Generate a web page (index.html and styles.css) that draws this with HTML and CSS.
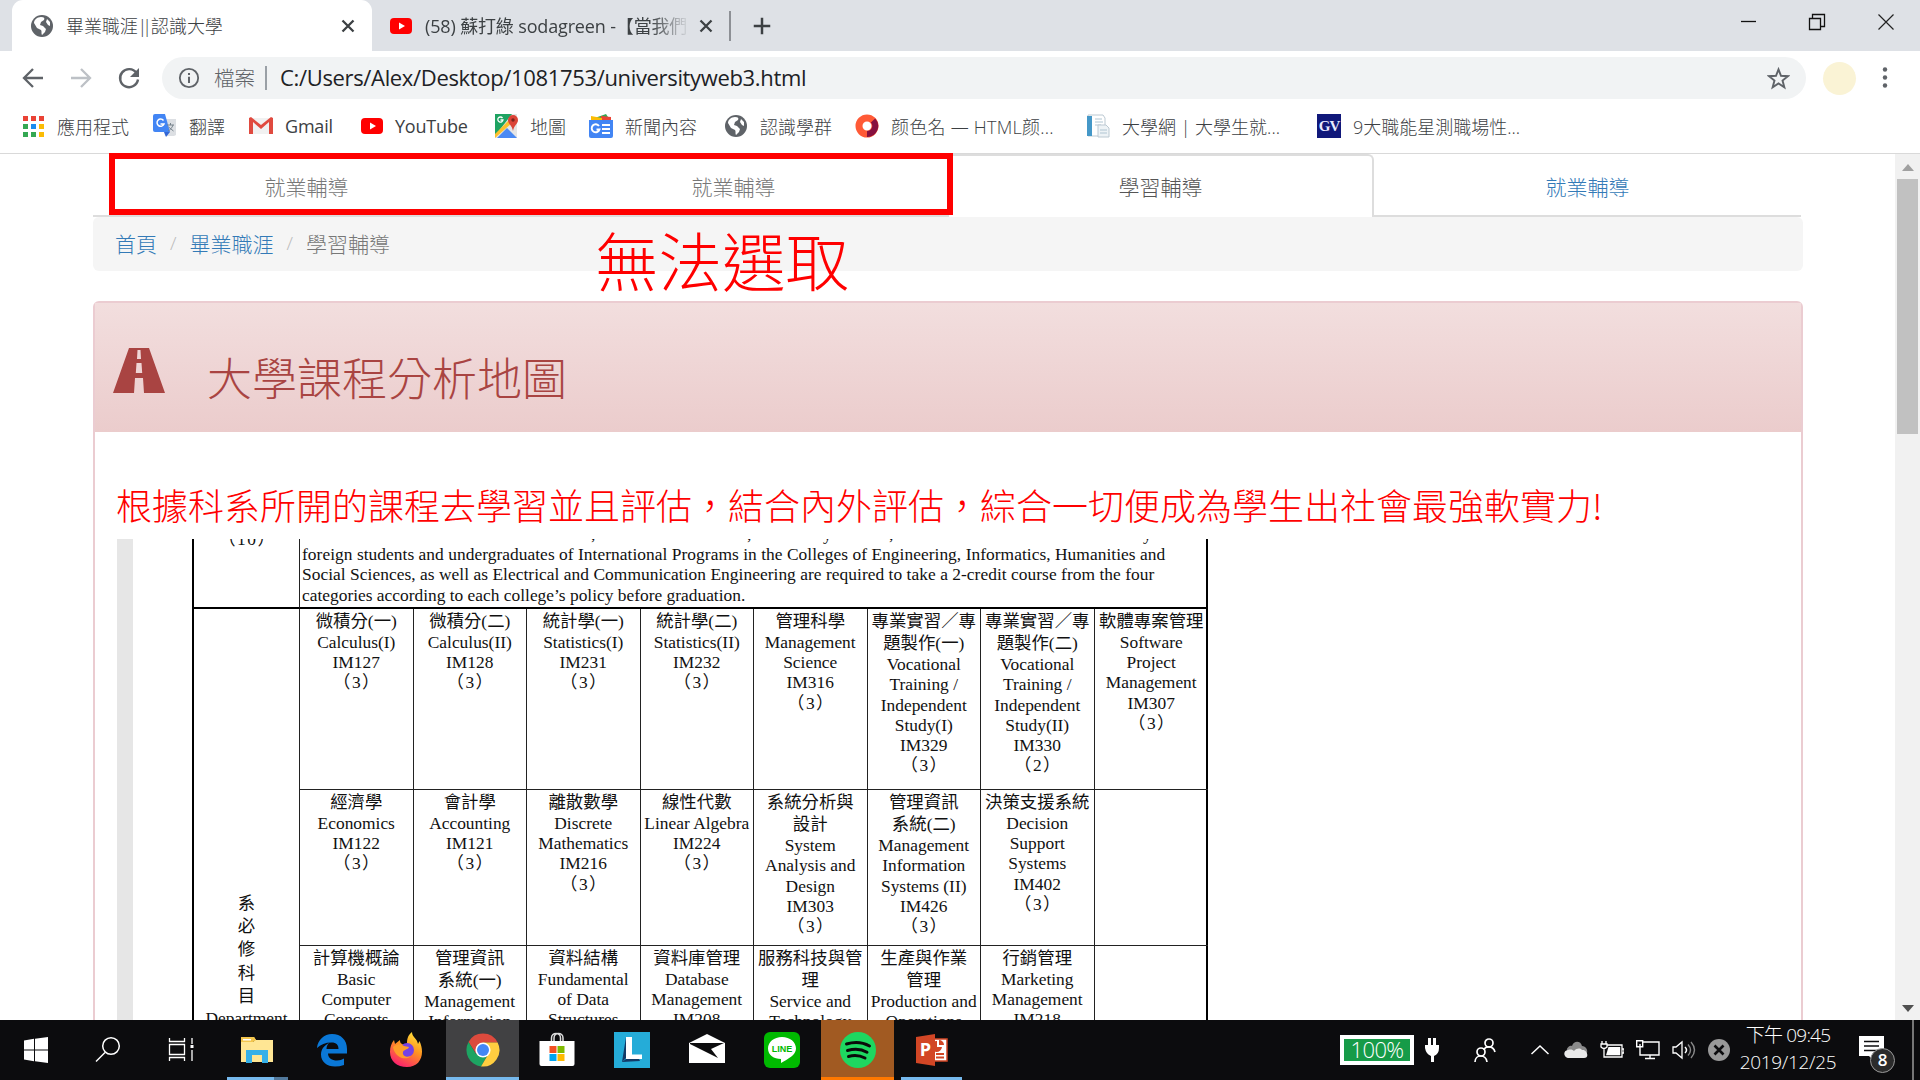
FILE: index.html
```html
<!DOCTYPE html>
<html lang="zh-Hant">
<head>
<meta charset="utf-8">
<title>畢業職涯||認識大學</title>
<link rel="stylesheet" href="styles.css">
</head>
<body>
<svg width="0" height="0" class="defs">
  <symbol id="globe" viewBox="0 0 24 24"><circle cx="12" cy="12" r="11" fill="#5f6368"/><path d="M11 3c3 0 4 1 3 3l-3 2-1 3 3 1 3 3-1 3-3 3c-1-1 0-4-1-5l-4-2-3-5c0-3 3-6 7-6zM17 5l3 3v4l-2-1-2-3z" fill="#fff"/></symbol>
  <symbol id="youtube" viewBox="0 0 24 24"><rect x="1" y="4" width="22" height="16" rx="4" fill="#f00"/><path d="M10 8.500v7l6-3.500z" fill="#fff"/></symbol>
  <symbol id="close" viewBox="0 0 24 24"><path d="M6.500 6.500l11 11m0-11l-11 11" stroke="#3c4043" stroke-width="2.300" fill="none"/></symbol>
</svg>
<header class="tabstrip">
  <div class="tab tab-active">
    <svg class="fav"><use href="#globe"/></svg><span class="tab-title">畢業職涯<span class="pipes">||</span>認識大學</span><svg class="fav"><use href="#close"/></svg>
  </div>
  <div class="tab tab-idle">
    <svg class="fav"><use href="#youtube"/></svg><span class="tab-title faded">(58) 蘇打綠 sodagreen -【當我們</span><svg class="fav"><use href="#close"/></svg>
  </div>
  <span class="tab-divider"></span>
  <svg class="plus" viewBox="0 0 24 24"><path d="M12 3v18M3 12h18" stroke="#3c4043" stroke-width="2.700"/></svg>
  <div class="win">
    <svg viewBox="0 0 20 20"><path d="M3 9.500h15" stroke="#111" stroke-width="1.300"/></svg>
    <svg viewBox="0 0 20 20"><path d="M2.500 6.500h11v11h-11zM5.500 6v-3.500h12v12H14" stroke="#111" stroke-width="1.300" fill="none"/></svg>
    <svg viewBox="0 0 20 20"><path d="M2.500 2.500l15 15m0-15l-15 15" stroke="#222" stroke-width="1.200"/></svg>
  </div>
</header>
<div class="toolbar">
  <svg class="nav" viewBox="0 0 24 24"><path d="M22 12H3M12 3l-9 9 9 9" stroke="#5f6368" stroke-width="2.300" fill="none"/></svg>
  <svg class="nav" viewBox="0 0 24 24"><path d="M2 12h19M12 3l9 9-9 9" stroke="#bdc1c6" stroke-width="2.300" fill="none"/></svg>
  <svg class="nav" viewBox="0 0 24 24"><path d="M19.500 7A9 9 0 1 0 21 13.500" stroke="#5f6368" stroke-width="2.400" fill="none"/><path d="M22 2v9h-9z" fill="#5f6368"/></svg>
  <div class="omnibox">
    <svg class="info" viewBox="0 0 24 24"><circle cx="12" cy="12" r="10" stroke="#5f6368" stroke-width="2" fill="none"/><path d="M12 10.500v7M12 6.500v2.300" stroke="#5f6368" stroke-width="2.200"/></svg>
    <span class="scheme">檔案</span><span class="bar"></span><span class="url">C:/Users/Alex/Desktop/1081753/universityweb3.html</span>
    <svg class="star" viewBox="0 0 24 24"><path d="M12 2.500l2.600 6.700 7.200.4-5.600 4.600 1.900 7-6.100-4-6.100 4 1.900-7-5.600-4.600 7.200-.4z" stroke="#5f6368" stroke-width="2" fill="none"/></svg>
  </div>
  <span class="avatar"></span>
  <svg class="dots" viewBox="0 0 8 24"><circle cx="4" cy="3.500" r="2.200"/><circle cx="4" cy="11.500" r="2.200"/><circle cx="4" cy="19.500" r="2.200"/></svg>
</div>
<nav class="bookmarks">
  <div class="bm"><svg viewBox="0 0 24 24"><path fill="#ea4335" d="M0 2h5v5H0zM8 2h5v5H8zM16 2h5v5h-5z"/><path fill="#34a853" d="M0 10h5v5H0zM0 18h5v5H0z"/><path fill="#1a8cf0" d="M8 10h5v5H8z"/><path fill="#fbbc05" d="M16 10h5v5h-5zM16 18h5v5h-5z"/><path fill="#34a853" d="M8 18h5v5H8z"/></svg><span class="apps-label">應用程式</span></div>
  <div class="bm"><svg viewBox="0 0 24 24"><path fill="#dcdfe3" d="M9 5h14v16l-2 1H12z"/><path fill="#4285f4" d="M2 0h10l5 18H2a2 2 0 0 1-2-2V2a2 2 0 0 1 2-2z"/><path fill="#3367d6" d="M11 18h6l-4 5z"/><path d="M10.500 6.500A3.600 3.600 0 1 0 11 10H7.500" stroke="#fff" stroke-width="1.500" fill="none"/><path d="M14 11h7M17.500 9v2M20 11c-1 3-3 5-5 6M15.500 13l5 4" stroke="#77838c" fill="none"/></svg>翻譯</div>
  <div class="bm"><svg viewBox="0 0 24 24"><path fill="#f1f1f1" d="M2 4h20v16H2z"/><path fill="#e04a3f" d="M0 4l2-1 10 8 10-8 2 1v16h-4V8l-8 7-8-7v12H0z"/></svg><span class="latin">Gmail</span></div>
  <div class="bm"><svg><use href="#youtube"/></svg><span class="latin yt">YouTube</span></div>
  <div class="bm"><svg viewBox="0 0 24 24"><path fill="#e5e5e5" d="M1 0h22v24H1z"/><path fill="#1ea362" d="M1 0h17L1 22z"/><path fill="#fbc02d" d="M1 24v-4L16 5l3 3z"/><path fill="#4a89f3" d="M3 24l10-10 10 10z"/><path fill="#db4437" d="M19 1a5 5 0 0 1 5 5c0 4-4 5-5 11-1-6-5-7-5-11a5 5 0 0 1 5-5z"/><circle cx="19" cy="6" r="1.700" fill="#7b231c"/><path d="M8.500 4A2.600 2.600 0 1 0 9 6H6.500" stroke="#fff" stroke-width="1.300" fill="none"/></svg>地圖</div>
  <div class="bm"><svg viewBox="0 0 24 24"><path fill="#34a853" d="M3 5l14-5 4 6z"/><path fill="#ea4335" d="M12 2l10 1v4H12z"/><path fill="#fbbc05" d="M2 2l11 2v4H2z"/><path fill="#4285f4" d="M0 6h24v16a2 2 0 0 1-2 2H2a2 2 0 0 1-2-2z"/><path d="M10 12a4 4 0 1 0 .5 3.500H7.500M13 11h8M13 15h8M13 19h8" stroke="#fff" stroke-width="1.900" fill="none"/></svg><span class="news">新聞內容</span></div>
  <div class="bm"><svg><use href="#globe"/></svg>認識學群</div>
  <div class="bm"><svg viewBox="0 0 24 24"><circle cx="12" cy="12" r="8" stroke="#ff5a36" stroke-width="7" fill="none"/><path d="M18 6.500a8 8 0 0 1-6 13.500" stroke="#86103f" stroke-width="6" fill="none"/></svg><span class="color-name">颜色名 — HTML颜...</span></div>
  <div class="bm"><svg viewBox="0 0 24 24"><path fill="#fff" stroke="#bcc9d2" d="M2 1h15l2 3v18H2z"/><path fill="#4598c8" d="M1 2h5v20H1z"/><path d="M9 5h7M9 8h8M9 11h6" stroke="#b0c5d2"/><path fill="#eef3f6" stroke="#bcc9d2" d="M12 11h8l3 3v9H12z"/><path d="M14 16h7M14 19h7" stroke="#b0c5d2"/></svg>大學網 | 大學生就...</div>
  <div class="bm"><span class="gv">GV</span>9大職能星測職場性...</div>
</nav>
<main class="viewport">
  <div class="page">
    <ul class="tabs">
      <li class="muted">就業輔導</li><li class="muted">就業輔導</li><li class="active">學習輔導</li><li class="link">就業輔導</li>
    </ul>
    <div class="crumbs"><span class="link">首頁</span><i>/</i><span class="link">畢業職涯</span><i>/</i><span class="muted">學習輔導</span></div>
    <section class="panel">
      <div class="panel-head">
        <svg viewBox="0 0 52 45"><path fill="#a94442" fill-rule="evenodd" d="M16 0h20l16 45H31l-1-15h-8l-1 15H0zM24.500 2l-.5 9h4l-.5-9zM23.500 15l-.7 10h6.400l-.7-10z"/></svg>
        <h1>大學課程分析地圖</h1>
      </div>
      <div class="panel-body">
        <p class="lead">根據科系所開的課程去學習並且評估，結合內外評估，綜合一切便成為學生出社會最強軟實力!</p>
        <div class="sheet">
          <div class="curriculum">
            <div class="side top"><i>（10）</i></div>
            <div class="note"><div class="clip"><span>,</span><span>,</span><span>y</span><span>,</span><span>y</span></div><div class="n1">foreign students and undergraduates of International Programs in the Colleges of Engineering, Informatics, Humanities and</div><div class="n2">Social Sciences, as well as Electrical and Communication Engineering are required to take a 2-credit course from the four</div><div>categories according to each college’s policy before graduation.</div></div>
            <div class="side dept"><b>系</b><b>必</b><b>修</b><b>科</b><b>目</b><div>Department</div></div>
            <div class="cell"><b>微積分(一)</b>Calculus(I)<br>IM127<br><i>（3）</i></div>
            <div class="cell"><b>微積分(二)</b>Calculus(II)<br>IM128<br><i>（3）</i></div>
            <div class="cell"><b>統計學(一)</b>Statistics(I)<br>IM231<br><i>（3）</i></div>
            <div class="cell"><b>統計學(二)</b>Statistics(II)<br>IM232<br><i>（3）</i></div>
            <div class="cell"><b>管理科學</b>Management<br>Science<br>IM316<br><i>（3）</i></div>
            <div class="cell"><b>專業實習／專</b><b>題製作(一)</b>Vocational<br>Training /<br>Independent<br>Study(I)<br>IM329<br><i>（3）</i></div>
            <div class="cell"><b>專業實習／專</b><b>題製作(二)</b>Vocational<br>Training /<br>Independent<br>Study(II)<br>IM330<br><i>（2）</i></div>
            <div class="cell"><b>軟體專案管理</b>Software<br>Project<br>Management<br>IM307<br><i>（3）</i></div>
            <div class="cell"><b>經濟學</b>Economics<br>IM122<br><i>（3）</i></div>
            <div class="cell"><b>會計學</b>Accounting<br>IM121<br><i>（3）</i></div>
            <div class="cell"><b>離散數學</b>Discrete<br>Mathematics<br>IM216<br><i>（3）</i></div>
            <div class="cell"><b>線性代數</b>Linear Algebra<br>IM224<br><i>（3）</i></div>
            <div class="cell"><b>系統分析與</b><b>設計</b>System<br>Analysis and<br>Design<br>IM303<br><i>（3）</i></div>
            <div class="cell"><b>管理資訊</b><b>系統(二)</b>Management<br>Information<br>Systems (II)<br>IM426<br><i>（3）</i></div>
            <div class="cell"><b>決策支援系統</b>Decision<br>Support<br>Systems<br>IM402<br><i>（3）</i></div>
            <div class="cell"></div>
            <div class="cell"><b>計算機概論</b>Basic<br>Computer<br>Concepts</div>
            <div class="cell"><b>管理資訊</b><b>系統(一)</b>Management<br>Information</div>
            <div class="cell"><b>資料結構</b>Fundamental<br>of Data<br>Structures</div>
            <div class="cell"><b>資料庫管理</b>Database<br>Management<br>IM208</div>
            <div class="cell"><b>服務科技與管</b><b>理</b>Service and<br>Technology</div>
            <div class="cell"><b>生產與作業</b><b>管理</b>Production and<br>Operations</div>
            <div class="cell"><b>行銷管理</b>Marketing<br>Management<br>IM218</div>
            <div class="cell"></div>
          </div>
        </div>
      </div>
    </section>
  </div>
  <div class="scroll"><svg viewBox="0 0 12 7"><path d="M0 7l6-7 6 7z" fill="#a0a0a0"/></svg><span class="thumb"></span><svg viewBox="0 0 12 7"><path d="M0 0l6 7 6-7z" fill="#505050"/></svg></div>
</main>
<div class="mark-box"></div>
<div class="mark-text">無法選取</div>
<footer class="taskbar">
  <div class="apps">
    <div class="app"><svg viewBox="0 0 32 36"><path fill="#fff" d="M4 8.500l10-1.700V17.500H4zM15 6.700L28 5V17.500H15zM4 18.500h10V29.200L4 27.600zM15 18.500H28V31l-13-1.700z"/></svg></div>
    <div class="app"><svg viewBox="0 0 32 36"><circle cx="19" cy="14" r="8.300" stroke="#fff" stroke-width="1.500" fill="none"/><path d="M13 20.500L4 29.500" stroke="#fff" stroke-width="1.500"/></svg></div>
    <div class="app"><svg viewBox="0 0 32 36"><path d="M3.500 6v3.500h15V6M3.500 29v-3.500h15V29M3.500 12.500h15v10h-15zM26 6v6M26 18v11" stroke="#fff" stroke-width="1.300" fill="none"/><path fill="#fff" d="M24.500 13h3v3h-3z"/></svg></div>
    <div class="app run2"><svg viewBox="0 0 36 36"><path fill="#f3c64e" d="M2 5h13l2 3H2z"/><path fill="#ffe694" d="M2 10h12l2-2h18v22H2z"/><path fill="#f3c64e" d="M2 5h13l2 3-3 2H2z"/><path fill="#fff" d="M4 7h8v1.500H4z"/><path fill="#35b0e8" d="M7 18h22v13h-6v-8H13v8H7z"/></svg></div>
    <div class="app"><svg viewBox="0 0 36 36"><path fill="#0a78d7" d="M3 15.500C4 8 10 2 18 2c9 0 15 6 15 15v4.500H14c0 4.500 4 7 9 7 3 0 5-.7 7-2v6.500c-3 1-6 1.500-9 1.500-8 0-14-4.500-14-12 0-5 3-9 8-11.500-2 2-2.500 4-2.500 6h12c0-4-2-6.500-7-6.500-6 0-11 2-14.500 5.500z"/></svg></div>
    <div class="app"><svg viewBox="0 0 36 36"><defs><linearGradient id="fx" x1=".8" y1="0" x2=".3" y2="1"><stop offset="0" stop-color="#ffe53b"/><stop offset=".45" stop-color="#ff9420"/><stop offset="1" stop-color="#fb1d70"/></linearGradient></defs><path fill="url(#fx)" d="M1 20c0-5 1-8 4-12l1 4 5-4c0 3 1 4 5 5l2 0c0-5 0-9 5-13 0 5 5 6 6 12l1.500-3c6 13 1 26-12.500 26C8 35 1 29 1 20z"/><circle cx="18" cy="18" r="7" fill="#7542e5"/><path fill="#ff9d2a" d="M4 15c4-4 8-3 11-1l5 1c-1 3-5 2-6 5-1 4 4 6 8 4-5 5-16 2-18-9z"/></svg></div>
    <div class="app chrome"><svg viewBox="0 0 36 36"><path fill="#dc4a3d" d="M3.500 10A16.500 16.500 0 0 1 32.600 10.500H18l-7 11z"/><path fill="#1da462" d="M3.500 10A16.500 16.500 0 0 0 16 34.400l7.500-12.900L11 22z"/><path fill="#ffcd40" d="M18 10.500h14.600A16.500 16.500 0 0 1 16 34.400l8-13.500z"/><circle cx="18" cy="18" r="7.600" fill="#fff"/><circle cx="18" cy="18" r="6" fill="#4387f5"/></svg></div>
    <div class="app"><svg viewBox="0 0 36 36"><path d="M12.500 10V6c0-6 9-6 9 0v4M15 10V6c0-6 9-6 9 0v4" stroke="#ddd" stroke-width="1.500" fill="none"/><path fill="#fff" d="M.5 9h35v23q0 2-2 2h-31q-2 0-2-2z"/><path fill="#f25022" d="M10.500 14h7v7h-7z"/><path fill="#7fba00" d="M18.500 14h7v7h-7z"/><path fill="#00a4ef" d="M10.500 22h7v7h-7z"/><path fill="#ffb900" d="M18.500 22h7v7h-7z"/></svg></div>
    <div class="app"><svg viewBox="0 0 36 36"><path fill="#25acd8" d="M0 0h36v36H0z"/><path fill="#123a66" d="M12 5L8 30l4-4zM8 30l18-1-1-2H12z"/><path fill="#fff" d="M12 5h6v17.500h10V27H12z"/></svg></div>
    <div class="app"><svg viewBox="0 0 36 36"><path fill="#fff" d="M0 11L18 2l18 9v20H0z"/><path fill="#0c0c0e" d="M1 11h34L22 17l7 9L1 12z"/></svg></div>
    <div class="app"><svg viewBox="0 0 36 36"><rect width="36" height="36" rx="6" fill="#00b900"/><path fill="#fff" d="M18 5c8 0 14 5 14 11.500C32 23 24 27 17 31v-4C10 27 4 23 4 16.500S10 5 18 5z"/><text x="18" y="20" text-anchor="middle" class="line">LINE</text></svg></div>
    <div class="app spotify"><svg viewBox="0 0 36 36"><circle cx="18" cy="18" r="18" fill="#1ed760"/><path d="M6.500 12c8-2.500 16-2 23 2M7.500 18.500c7-2 14-1.500 19.500 1.700M8.500 24.500c6-1.600 11.500-1 16.500 1.500" stroke="#0a0a0a" stroke-width="3" stroke-linecap="round" fill="none"/></svg></div>
    <div class="app run"><svg viewBox="0 0 36 36"><path fill="#fff" stroke="#d24625" stroke-width="1.500" d="M16 7h17v22H16z"/><path fill="#d24625" d="M2 5l19-3v32L2 31z"/><path d="M22 22h8M22 25.500h8" stroke="#d24625" stroke-width="1.800"/><path fill="#d24625" d="M23 9a5.500 5.500 0 1 0 5 6h-5zM25 8a5 5 0 0 1 5 5h-5z"/><text x="11.500" y="24" text-anchor="middle" class="ppt">P</text></svg></div>
  </div>
  <div class="tray">
    <span class="battery">100%</span>
    <svg class="plug" viewBox="0 0 14 24"><path fill="#fff" d="M3 0h3v7h2V0h3v7h3v3q0 6-5 8v6H6v-6q-5-2-6-8V7h3z"/></svg>
    <svg class="t22" viewBox="0 0 22 24"><g fill="none" stroke="#fff" stroke-width="1.700"><circle cx="15" cy="5" r="4"/><circle cx="7" cy="14" r="4"/><path d="M10 12c1-4 9-5 11 2M1 24c0-8 11-8 12 0"/></g></svg>
    <svg class="t20 chev" viewBox="0 0 20 20"><path d="M1.500 14L10 6l8.500 8" stroke="#fff" stroke-width="1.500" fill="none"/></svg>
    <svg class="t24" viewBox="0 0 24 20"><path fill="#8a8a8a" d="M3 11C2 7 7 5 8 6c2-6 9-5 10 0 4 0 6 4 5 7z"/><path fill="#e9e9e9" d="M5 18C0 18-2 11 4 10c3-1 5 0 6 1 3-3 6-3 8-1 5-1 8 8 2 8z"/></svg>
    <svg class="t24" viewBox="0 0 24 20"><path d="M7 5h15v12H4v-6M22 9h2v4h-2M2 1v3M6 1v3M1 4h6v3q-3 3-6 0zM4 8v3" stroke="#fff" stroke-width="1.300" fill="none"/><path fill="#fff" d="M8.500 7h11.700v8.300H6z"/></svg>
    <svg class="t24" viewBox="0 0 24 20"><path d="M7 2h16v13H4V8M14 15v3M9 18.500h10M.7.7h6v6h-6zM4 4v4" stroke="#fff" stroke-width="1.400" fill="none"/></svg>
    <svg class="t24" viewBox="0 0 24 20"><path d="M1 7h3l6-5v16l-6-5H1z" stroke="#fff" stroke-width="1.300" fill="none"/><path d="M13 7q3 3 0 6" stroke="#fff" stroke-width="1.500" fill="none"/><path d="M16 4.500q5 5.500 0 11M19 2q7 8 0 16" stroke="#888" stroke-width="1.400" fill="none"/></svg>
    <svg class="t22" viewBox="0 0 22 22"><circle cx="11" cy="11" r="11" fill="#999"/><path d="M6.500 6.500l9 9m0-9l-9 9" stroke="#0c0c0e" stroke-width="2.600"/></svg>
    <div class="clock"><span>下午 09:45</span><span class="date">2019/12/25</span></div>
    <div class="notif"><svg viewBox="0 0 26 26"><path fill="#fff" d="M0 0h25v20h-9v6l-6-6H0z"/><path d="M5 5.500h15M5 10h15M5 14.500h15" stroke="#0c0c0e" stroke-width="1.500"/></svg><span class="badge">8</span></div>
    <span class="peek"></span>
  </div>
</footer>
</body>
</html>
```
FILE: styles.css
```css
* { box-sizing: border-box; }
body { margin: 0; width: 1920px; height: 1080px; overflow: hidden; display: flex; flex-direction: column; background: #fff; font-family: "Open Sans", "Noto Sans CJK TC", sans-serif; font-weight: 300; color: #3c4043; }
svg { display: block; flex: none; }
.defs { position: absolute; }

.tabstrip { height: 51px; background: #dee1e6; display: flex; align-items: center; flex: none; font-size: 18px; }
.tab { display: flex; align-items: center; height: 51px; white-space: nowrap; }
.tab-active { width: 360px; margin-left: 12px; padding: 0 12px 0 18px; background: #fff; border-radius: 11px 11px 0 0; }
.tab-idle { width: 348px; padding: 0 2px 0 17px; }
.fav { width: 24px; height: 24px; }
.tab-title { flex: 1; margin-left: 12px; padding-bottom: 2px; overflow: hidden; letter-spacing: -0.1px; }
.pipes { letter-spacing: -5px; margin-right: 4px; }
.tab-idle .tab-title { margin: 0 5px 0 12px; letter-spacing: -0.15px; font-weight: 400; }
.faded { mask-image: linear-gradient(90deg, #000 225px, transparent 265px); }
.tab-divider { width: 2px; height: 30px; background: #8d9095; margin: 0 20px 0 9px; }
.plus { width: 22px; height: 22px; }
.win { margin-left: auto; display: flex; gap: 49px; padding: 0 24px 8px 0; }
.win svg { width: 20px; height: 20px; }

.toolbar { height: 54px; display: flex; align-items: center; flex: none; padding-left: 21px; }
.nav { width: 24px; height: 24px; margin-right: 24px; }
.nav:nth-child(3) { margin-right: 21px; }
.omnibox { width: 1644px; height: 42px; border-radius: 21px; background: #f1f3f4; display: flex; align-items: center; padding: 0 16px; }
.info { width: 22px; height: 22px; }
.scheme { font-size: 20.5px; color: #5f6368; margin-left: 14px; width: 41px; white-space: nowrap; padding-bottom: 2px; }
.bar { width: 2px; height: 24px; background: #9aa0a6; margin: 0 13px 0 10px; }
.url { font-size: 22px; font-weight: 400; color: #202124; letter-spacing: -0.34px; white-space: nowrap; padding-bottom: 2px; }
.star { width: 23px; height: 23px; margin-left: auto; }
.avatar { width: 33px; height: 33px; border-radius: 50%; background: #faf3d5; margin: 0 25px 0 17px; }
.dots { width: 8px; height: 24px; fill: #5f6368; }

.bookmarks { height: 49px; flex: none; border-bottom: 1px solid #d9d9d9; padding: 0 0 6px 23px; display: grid; align-items: center; grid-template-columns: 130px 96px 111px 134px 95px 135px 131px 231px 231px 1fr; font-size: 18px; }
.bm { display: flex; align-items: center; gap: 12px; white-space: nowrap; }
.bm svg { width: 24px; height: 24px; }
.apps-label { margin-left: -2px; }
.latin { font-weight: 400; letter-spacing: -0.2px; }
.yt { margin-left: -1px; }
.color-name { letter-spacing: 0.25px; }
.gv { width: 24px; height: 24px; background: #10187a; color: #e8eaff; font: 700 15px/24px "Liberation Serif", serif; text-align: center; letter-spacing: -1px; }

.viewport { height: 866px; flex: none; display: flex; overflow: hidden; }
.page { width: 1895px; padding: 0 92px 0 93px; }
.tabs { list-style: none; margin: 0; padding: 0; height: 63px; display: grid; grid-template-columns: repeat(4, 427px); }
.tabs li { display: flex; align-items: center; justify-content: center; font-size: 21px; padding-top: 2px; border-bottom: 2px solid #ddd; }
.tabs .active { color: #555; border: 2px solid #ddd; border-bottom: 0; border-radius: 6px 6px 0 0; padding: 0 0 2px; }
.link { color: #337ab7; }
.muted { color: #777; }
.crumbs { height: 54px; background: #f5f5f5; border-radius: 6px; padding: 0 0 2px 22px; display: flex; align-items: center; font-size: 21px; }
.crumbs i { font-style: normal; color: #bbb; width: 32.500px; text-align: center; font-size: 19px; }
.panel { margin-top: 30px; height: 800px; border: 2px solid #ebccd1; border-radius: 6px; }
.panel-head { height: 129px; background: linear-gradient(#f2dede, #ebcccc); display: flex; padding: 45px 0 0 18px; }
.panel-head svg { width: 52px; height: 45px; }
.panel-head h1 { margin: 3px 0 0 42px; font-size: 45px; line-height: 56px; font-weight: 200; color: #a94442; }
.panel-body { padding: 45px 0 0 22px; }
.lead { margin: 0 0 0 -1px; height: 62px; line-height: 54px; font-size: 36px; font-weight: 300; color: #f00; white-space: nowrap; font-family: "Noto Sans CJK TC", sans-serif; }

.sheet { height: 481px; border-left: 16px solid #e6e6e6; padding-left: 59px; overflow: hidden; }
.curriculum { width: 1016px; display: grid; grid-template-columns: 106px repeat(8, 113.500px); grid-template-rows: 70px 181px 156px 76px; font: 400 17.4px/20.2px "Liberation Serif", "Noto Sans CJK TC", serif; color: #111; border-left: 2px solid #000; border-right: 2px solid #000; text-align: center; }
.curriculum b { display: block; font-weight: 400; height: 22.4px; line-height: 22.4px; white-space: nowrap; }
.curriculum i { font-style: normal; letter-spacing: 1.5px; margin-right: -1.5px; }
.side { border-right: 1.5px solid #222; }
.top { border-bottom: 2px solid #000; margin-top: -10px; }
.note { grid-column: 2 / -1; border-bottom: 2px solid #000; margin-top: -15px; padding-left: 2px; text-align: left; white-space: nowrap; }
.note > div { height: 20.2px; }
.n1, .n2 { letter-spacing: 0.04px; }
.clip { display: grid; grid-template-columns: 156px 76px 66px 254px auto; padding-left: 289px; }
.dept { grid-row: 2 / 5; padding-top: 283px; }
.dept b { height: 23.2px; line-height: 23.2px; }
.cell { border-right: 1.500px solid #222; border-bottom: 1.500px solid #222; padding-top: 0.5px; white-space: nowrap; }
.cell:nth-child(8n+3) { border-right: 0; }

.scroll { width: 25px; background: #f1f1f1; display: flex; flex-direction: column; align-items: center; padding: 10px 0 8px; }
.scroll svg { width: 12px; height: 7px; }
.thumb { width: 21px; height: 255px; background: #c1c1c1; margin: 8px 0 auto; }

.mark-box { position: absolute; left: 109px; top: 153px; width: 844px; height: 62px; border: 6px solid #f00; }
.mark-text { position: absolute; left: 595px; top: 223px; font: 300 63.500px/70px "Noto Sans CJK TC", sans-serif; color: #f00; }

.taskbar { height: 60px; flex: none; background: #0c0c0e; display: flex; justify-content: space-between; color: #fff; }
.apps { display: grid; grid-template-columns: 72px 72px 75px repeat(10, 75px); }
.app { display: flex; align-items: center; justify-content: center; }
.app svg { width: 36px; height: 36px; }
.app:nth-child(-n+3) svg { width: 32px; }
.chrome { background: linear-gradient(#76b9ed, #76b9ed) bottom / 100% 3px no-repeat #414143; margin-left: 2px; }
.spotify { background: linear-gradient(#ff7800, #ff7800) bottom / 100% 3px no-repeat #a15a22; margin-left: 2px; }
.run { background: linear-gradient(#76b9ed, #76b9ed) center bottom / 61px 3px no-repeat; }
.run2 { background: linear-gradient(90deg, #76b9ed 47px, #52799c 47px) 8px bottom / 61px 3px no-repeat; }
.line { font: 700 9px "Liberation Sans", sans-serif; fill: #00b900; }
.ppt { font: 700 18px "Open Sans", sans-serif; fill: #fff; }
.tray { width: 580px; display: flex; align-items: center; font-weight: 400; }
.tray > * { flex: none; }
.battery { width: 74px; height: 30px; border: 4px solid #fff; background: #169b48; font-size: 22px; line-height: 20px; text-align: center; letter-spacing: -0.6px; font-weight: 300; }
.plug { width: 14px; height: 24px; margin: 0 35px 0 11px; }
.t22 { width: 22px; height: 24px; }
.t20 { width: 20px; height: 20px; }
.chev { margin: 0 14px 0 34px; }
.t24 { width: 24px; height: 20px; margin-right: 12px; }
.clock { width: 96px; margin-left: 10px; display: flex; flex-direction: column; align-items: center; font-size: 19px; line-height: 27px; white-space: nowrap; letter-spacing: -0.8px; padding-bottom: 3px; font-weight: 300; }
.date { letter-spacing: -0.3px; }
.notif { position: relative; margin-left: 23px; width: 37px; height: 28px; }
.notif svg { width: 26px; height: 26px; }
.badge { position: absolute; left: 11px; top: 12px; width: 25px; height: 25px; border: 1.500px solid #999; border-radius: 50%; background: #2b2b2b; font-size: 17px; font-weight: 600; line-height: 22px; text-align: center; }
.peek { width: 2px; height: 60px; background: #777; margin: 0 6px 0 auto; }
```
